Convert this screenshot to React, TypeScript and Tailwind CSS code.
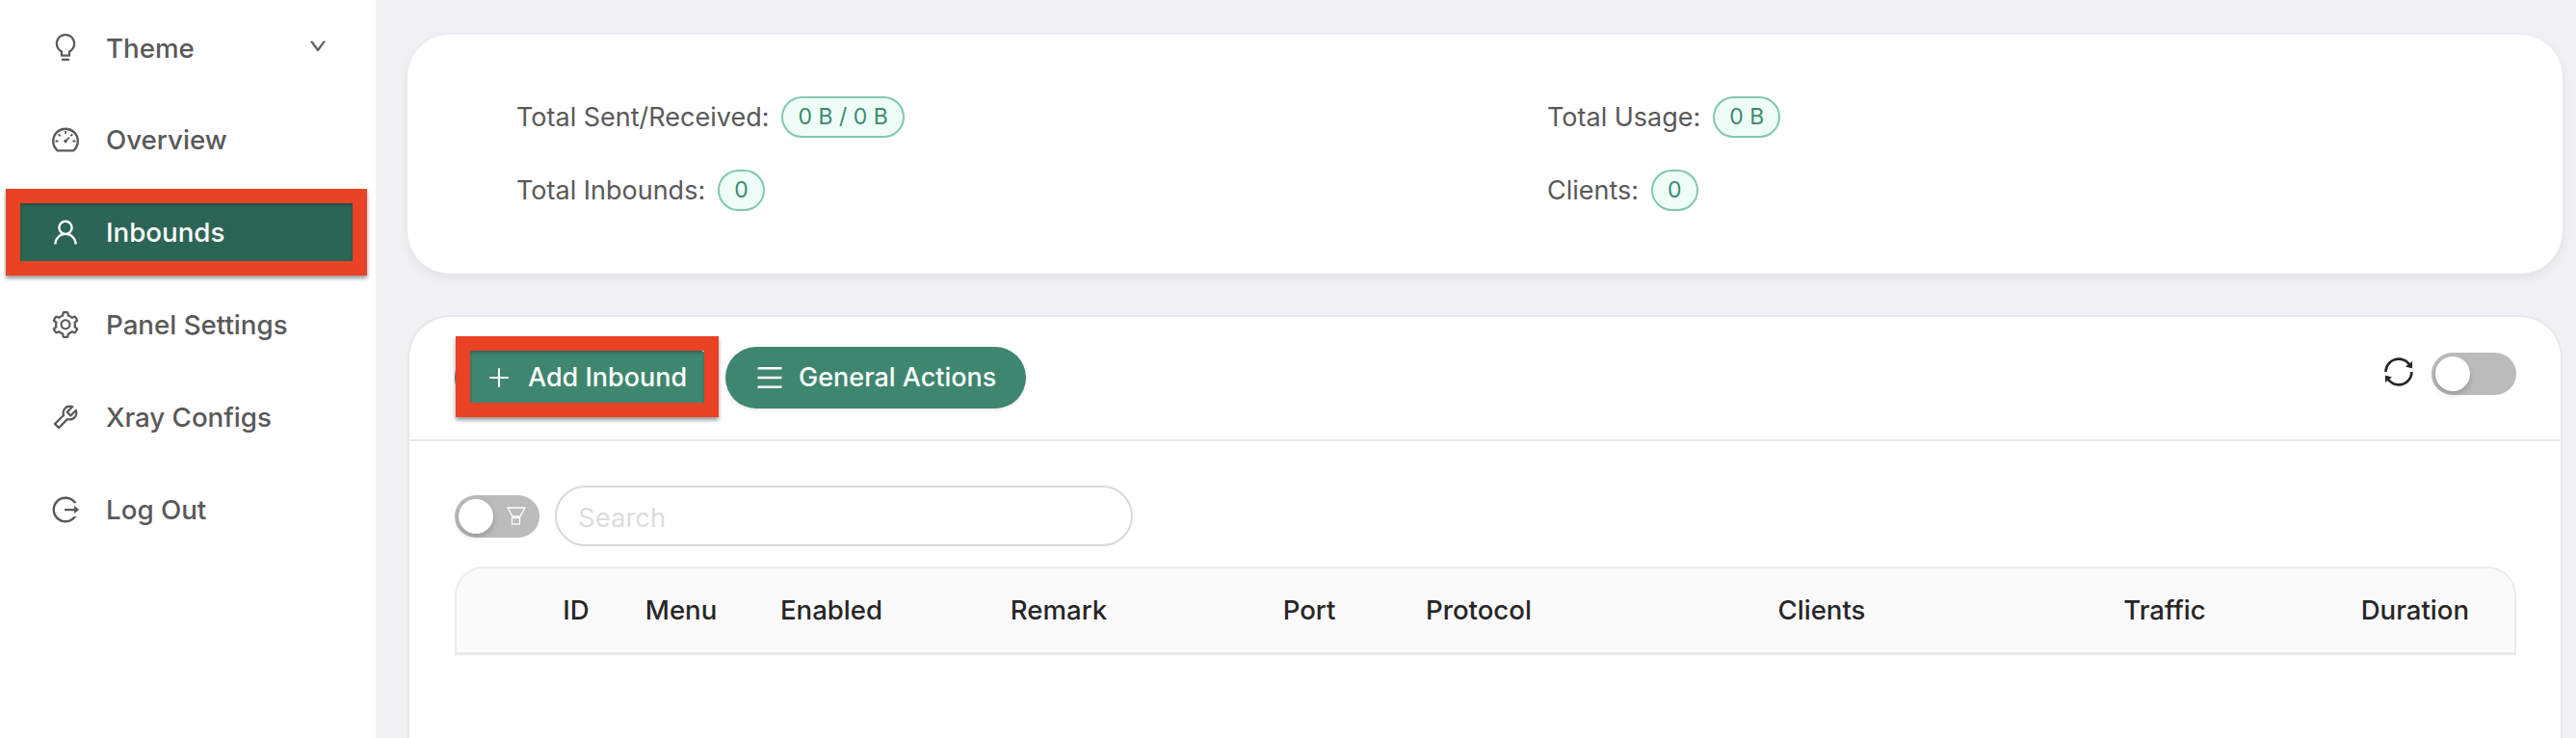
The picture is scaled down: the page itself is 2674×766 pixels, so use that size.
import {
  AiOutlineBulb,
  AiOutlineDashboard,
  AiOutlineDown,
  AiOutlineLogout,
  AiOutlineMenu,
  AiOutlinePlus,
  AiOutlineSetting,
  AiOutlineSync,
  AiOutlineTool,
  AiOutlineUser,
} from "react-icons/ai"

const navItems = [
  { label: "Overview", icon: AiOutlineDashboard },
  { label: "Inbounds", icon: AiOutlineUser, active: true },
  { label: "Panel Settings", icon: AiOutlineSetting },
  { label: "Xray Configs", icon: AiOutlineTool },
  { label: "Log Out", icon: AiOutlineLogout },
]

const stats = [
  { label: "Total Sent/Received:", value: "0 B / 0 B" },
  { label: "Total Usage:", value: "0 B" },
  { label: "Total Inbounds:", value: "0" },
  { label: "Clients:", value: "0" },
]

function Sidebar() {
  return (
    <aside className="w-[390px] shrink-0 bg-white pt-[19px] pl-[21px] flex flex-col gap-[36px] text-[#595959] text-[27.7px] font-medium">
      <div className="w-[345px] h-[60px] flex items-center pl-[31px]">
        <AiOutlineBulb className="w-[32px] h-[32px]" />
        <span className="ml-[26px] pt-[3px]">Theme</span>
        <AiOutlineDown className="w-[20px] h-[20px] ml-auto mr-[26px] -mt-[2px] stroke-[40]" />
      </div>
      {navItems.map((item) => (
        <div key={item.label} className="relative w-[345px] h-[60px] flex items-center pl-[31px]">
          {item.active && <div className="absolute inset-0 bg-[#2c6555]" />}
          <item.icon className={`relative w-[32px] h-[32px] ${item.active ? "text-white" : ""}`} />
          <span className={`relative ml-[26px] pt-[2px] ${item.active ? "text-white" : ""}`}>
            {item.label}
          </span>
          {item.active && <Marker className="-inset-[15px]" />}
        </div>
      ))}
    </aside>
  )
}

function Marker({ className }: { className: string }) {
  return (
    <div
      className={`absolute border-[15px] border-[#e94225] shadow-[0_3px_4px_rgba(0,0,0,0.4),inset_0_2px_3px_rgba(0,0,0,0.25)] ${className}`}
    />
  )
}

function Toggle({ children }: { children?: React.ReactNode }) {
  return (
    <div className="relative w-[88px] h-[44px] rounded-full bg-[#bbbbbb] shrink-0">
      <div className="absolute top-[4px] left-[4px] w-[36px] h-[36px] rounded-full bg-white shadow-[0_3px_6px_rgba(0,0,0,0.2)]" />
      {children}
    </div>
  )
}

function FunnelIcon() {
  return (
    <svg
      viewBox="0 0 20 19"
      fill="none"
      stroke="currentColor"
      strokeWidth="1.3"
      className="absolute top-[12px] right-[14px] w-[20px] h-[19px] text-white"
    >
      <path d="M1 1H19L14 10H6Z" />
      <rect x="5.5" y="11.5" width="8" height="6.5" />
    </svg>
  )
}

function Badge({ value }: { value: string }) {
  return (
    <span className="h-[43px] min-w-[47px] px-[15px] flex items-center justify-center rounded-full border-2 border-[#82c8ae] bg-[#effdf8] text-[#3b8a6e] text-[23px]">
      {value}
    </span>
  )
}

export default function App() {
  return (
    <div className="h-[766px] w-[2674px] overflow-hidden flex font-['Inter',sans-serif] bg-[#eff1f5]">
      <Sidebar />
      <main className="flex-1 pt-[36px] pl-[33px] pr-[14px] flex flex-col gap-[43px]">
        <section className="h-[248px] shrink-0 rounded-[44px] bg-white shadow-[0_4px_12px_rgba(0,0,0,0.07)] pt-[64px] pl-[113px] grid grid-cols-[1070px_1fr] auto-rows-[43px] gap-y-[33px]">
          {stats.map((s) => (
            <div key={s.label} className="flex items-center gap-[13px] text-[#595959] text-[27px]">
              <span className="pt-[2px]">{s.label}</span>
              <Badge value={s.value} />
            </div>
          ))}
        </section>

        <section className="flex-1 rounded-t-[44px] bg-white border-2 border-b-0 border-[#e8e8e8]">
          <div className="h-[129px] border-b-2 border-[#e8e8e8] flex items-start pl-[47px] pr-[46px]">
            <div className="relative mt-[31px] w-[273px] h-[64px] rounded-full bg-[#3e866f] flex items-center pl-[32px] text-white text-[27px] font-medium">
              <AiOutlinePlus className="w-[28px] h-[28px]" />
              <span className="ml-[16px]">Add Inbound</span>
              <Marker className="-top-[11px] -bottom-[9px] left-[1px] -right-[1px]" />
            </div>
            <div className="mt-[31px] ml-[8px] w-[312px] h-[64px] rounded-full bg-[#3e866f] shadow-[0_2px_4px_rgba(0,0,0,0.08)] flex items-center pl-[30px] text-white text-[27px] font-medium">
              <AiOutlineMenu className="w-[32px] h-[32px]" />
              <span className="ml-[14px]">General Actions</span>
            </div>
            <div className="ml-auto mt-[37px] flex items-center gap-[16px]">
              <AiOutlineSync className="w-[36px] h-[36px] text-[#262626] -mt-[4px]" />
              <Toggle />
            </div>
          </div>

          <div className="pt-[46px] pl-[47px] pr-[46px]">
            <div className="flex items-center gap-[16px]">
              <Toggle>
                <FunnelIcon />
              </Toggle>
              <input
                placeholder="Search"
                className="w-[600px] h-[63px] rounded-full border-2 border-[#d9d9d9] px-[22px] pt-[2px] text-[27.5px] bg-white placeholder:text-[#dcdcdc] outline-none"
              />
            </div>

            <div className="mt-[21px] h-[92px] rounded-t-[30px] bg-[#fafafa] border-2 border-[#ececec] border-b-[3px] border-b-[#e8e8e8] flex items-center pl-[74px] pr-[47px] text-[27.6px] font-medium text-[#262626] text-center">
              <span className="w-[100px]">ID</span>
              <span className="w-[118px]">Menu</span>
              <span className="w-[194px]">Enabled</span>
              <span className="w-[278px]">Remark</span>
              <span className="w-[242px]">Port</span>
              <span className="w-[110px]">Protocol</span>
              <span className="w-[602px]">Clients</span>
              <span className="w-[110px]">Traffic</span>
              <span className="flex-1 text-right">Duration</span>
            </div>
          </div>
        </section>
      </main>
    </div>
  )
}
